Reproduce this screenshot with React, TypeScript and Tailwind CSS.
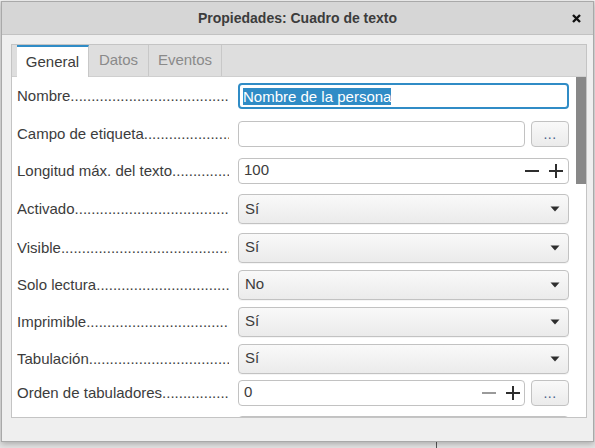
import React from "react";

const DOTS = ".".repeat(90);

function Label({ text }: { text: string }) {
  return (
    <div className="w-[212px] mr-[9px] shrink-0 overflow-hidden whitespace-nowrap text-[15px] leading-[18px] text-[#3c3c3c]">
      {text}
      {DOTS}
    </div>
  );
}

function Arrow() {
  return (
    <svg width="10" height="6" viewBox="0 0 10 6" className="shrink-0">
      <path d="M0.5 0.5 L9.5 0.5 L5 5.5 Z" fill="#2e2e2e" />
    </svg>
  );
}

function Select({ value }: { value: string }) {
  return (
    <div className="w-[331px] h-[30px] rounded-[4px] border border-[#c2c2c2] bg-linear-to-b from-[#f9f9f9] to-[#ebebeb] flex items-center pl-[6px] pr-[8px] shadow-[0_1px_0_rgba(0,0,0,0.04)]">
      <span className="flex-1 text-[15px] text-[#3c3c3c]">{value}</span>
      <Arrow />
    </div>
  );
}

function Minus({ disabled }: { disabled?: boolean }) {
  return (
    <svg width="14" height="14" viewBox="0 0 14 14" className="shrink-0">
      <path d="M0 7 H14" stroke={disabled ? "#9a9a9a" : "#2e2e2e"} strokeWidth="2" />
    </svg>
  );
}

function Plus() {
  return (
    <svg width="14" height="14" viewBox="0 0 14 14" className="shrink-0">
      <path d="M0 7 H14 M7 0 V14" stroke="#2e2e2e" strokeWidth="2" />
    </svg>
  );
}

function DotsButton() {
  return (
    <div className="w-[38px] h-[26px] rounded-[4px] border border-[#c2c2c2] bg-linear-to-b from-[#f9f9f9] to-[#ebebeb] flex items-center justify-center text-[14px] text-[#46608a] tracking-[0.5px]">
      <span className="mt-[2px]">...</span>
    </div>
  );
}

export default function App() {
  return (
    <div className="w-[595px] h-[448px] bg-[#e4e4e4] relative overflow-hidden font-['Liberation_Sans',sans-serif]">
      {/* desktop bits behind the window */}
      <div className="absolute left-[436px] top-[441px] w-[1px] h-[7px] bg-[#555]" />
      <div className="absolute left-0 top-0 w-[595px] h-[1px] bg-[#f4f4f4]" />

      {/* dialog window */}
      <div className="absolute left-[1px] top-[1px] w-[593px] h-[441px] border border-[#a9a9a9] bg-[#efefef] flex flex-col shadow-[0_2px_6px_rgba(0,0,0,0.25)]">
        {/* title bar */}
        <div className="h-[33px] shrink-0 bg-[#d6d6d6] border-b border-[#c2c2c2] flex items-center justify-center relative">
          <span className="text-[14px] font-bold text-[#3c3c3c] mt-[1px]">
            Propiedades: Cuadro de texto
          </span>
          <svg
            width="9"
            height="9"
            viewBox="0 0 9 9"
            className="absolute right-[12px] top-[12px]"
          >
            <path d="M1 1 L8 8 M8 1 L1 8" stroke="#111" strokeWidth="2.4" />
          </svg>
        </div>

        {/* body */}
        <div className="flex-1 pt-[9px] pl-[9px]">
          <div className="w-[576px] h-[374px] border border-[#c4c4c4] bg-white flex flex-col overflow-hidden">
            {/* tab strip */}
            <div className="h-[32px] shrink-0 bg-[#dedede] flex pl-[5px] border-b border-[#cfcfcf]">
              <div className="w-[72px] h-[32px] bg-white border-t-2 border-[#308cc6] border-r border-r-[#c8c8c8] flex items-center justify-center text-[15px] text-[#3c3c3c] -mb-[1px] relative z-10">
                General
              </div>
              <div className="w-[60px] border-r border-[#c8c8c8] flex items-center justify-center text-[15px] text-[#8a8a8a]">
                Datos
              </div>
              <div className="w-[73px] border-r border-[#c8c8c8] flex items-center justify-center text-[15px] text-[#8a8a8a]">
                Eventos
              </div>
            </div>

            {/* content */}
            <div className="flex-1 flex overflow-hidden">
              <div className="flex-1 flex flex-col pl-[5px]">
                {/* Nombre */}
                <div className="h-[38px] shrink-0 flex items-center">
                  <Label text="Nombre" />
                  <div className="w-[331px] h-[26px] rounded-[4px] border-2 border-[#308cc6] bg-white flex items-center pl-[3px]">
                    <span className="bg-[#308cc6] text-white text-[15px] leading-[17px]">
                      Nombre de la persona
                    </span>
                  </div>
                </div>
                {/* Campo de etiqueta */}
                <div className="h-[37px] shrink-0 flex items-center">
                  <Label text="Campo de etiqueta" />
                  <div className="w-[287px] h-[26px] rounded-[4px] border border-[#c2c2c2] bg-white mr-[6px]" />
                  <DotsButton />
                </div>
                {/* Longitud */}
                <div className="h-[37px] shrink-0 flex items-center">
                  <Label text="Longitud máx. del texto" />
                  <div className="w-[331px] h-[26px] rounded-[4px] border border-[#c2c2c2] bg-white flex items-center pl-[5px] pr-[5px] gap-[10px]">
                    <span className="flex-1 text-[15px] text-[#3c3c3c]">100</span>
                    <Minus />
                    <Plus />
                  </div>
                </div>
                {/* Activado */}
                <div className="h-[40px] shrink-0 flex items-center">
                  <Label text="Activado" />
                  <Select value="Sí" />
                </div>
                <div className="h-[37px] shrink-0 flex items-center">
                  <Label text="Visible" />
                  <Select value="Sí" />
                </div>
                <div className="h-[37px] shrink-0 flex items-center">
                  <Label text="Solo lectura" />
                  <Select value="No" />
                </div>
                <div className="h-[37px] shrink-0 flex items-center">
                  <Label text="Imprimible" />
                  <Select value="Sí" />
                </div>
                <div className="h-[37px] shrink-0 flex items-center">
                  <Label text="Tabulación" />
                  <Select value="Sí" />
                </div>
                {/* Orden */}
                <div className="h-[31px] shrink-0 flex items-center">
                  <Label text="Orden de tabuladores" />
                  <div className="w-[287px] h-[26px] rounded-[4px] border border-[#c2c2c2] bg-white flex items-center pl-[5px] pr-[4px] gap-[10px] mr-[6px]">
                    <span className="flex-1 text-[15px] text-[#3c3c3c]">0</span>
                    <Minus disabled />
                    <Plus />
                  </div>
                  <DotsButton />
                </div>
                {/* next row, cut off */}
                <div className="shrink-0 flex mt-[8px] pl-[221px]">
                  <div className="w-[331px] h-[30px] rounded-[4px] border border-[#c2c2c2] bg-[#f7f7f7]" />
                </div>
              </div>
              {/* scrollbar */}
              <div className="w-[10px] shrink-0 flex flex-col">
                <div className="h-[107px] bg-[#888888]" />
              </div>
            </div>
          </div>
        </div>
      </div>
    </div>
  );
}
